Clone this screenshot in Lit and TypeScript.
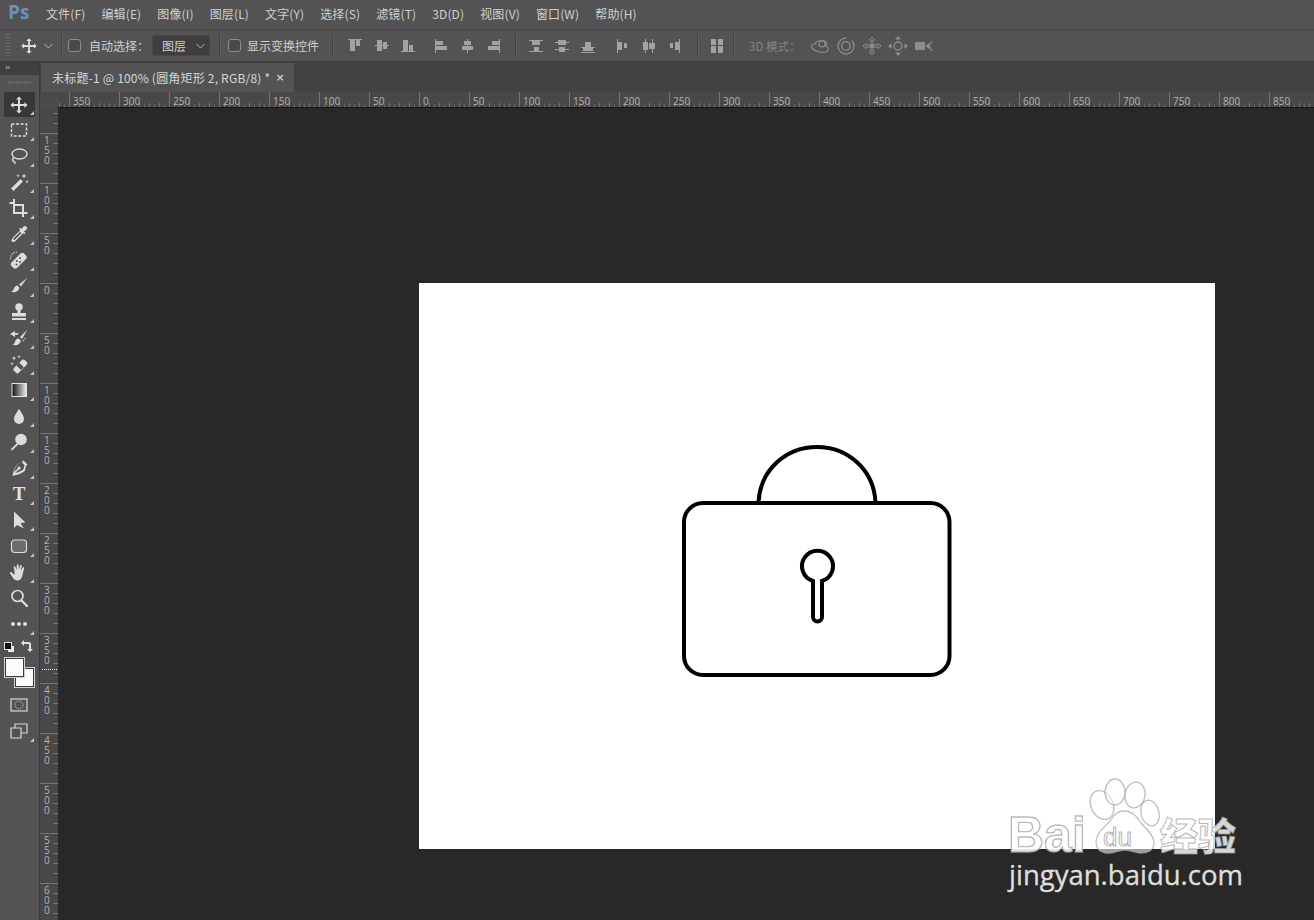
import { LitElement, html, css, svg } from "lit";
import { customElement } from "lit/decorators.js";

const MENUS = ["文件(F)", "编辑(E)", "图像(I)", "图层(L)", "文字(Y)", "选择(S)", "滤镜(T)", "3D(D)", "视图(V)", "窗口(W)", "帮助(H)"];

const moveIcon = svg`<path d="M10 1.5l3 3h-2v4.500h4.500v-2l3 3-3 3v-2H11v4.500h2l-3 3-3-3h2V11H4.500v2l-3-3 3-3v2H9V4.500H7z"/>`;

const TOOLS: { k: string; i: unknown; c?: boolean }[] = [
  { k: "move", i: moveIcon, c: true },
  { k: "marquee", i: svg`<rect x="2.500" y="4" width="15" height="12" fill="none" stroke="currentColor" stroke-width="1.400" stroke-dasharray="3 1.600"/>`, c: true },
  { k: "lasso", i: svg`<ellipse cx="10.500" cy="8" rx="7.500" ry="5" fill="none" stroke="currentColor" stroke-width="1.400"/><path d="M5 12c-2 1-2 3 0 3.500 1.500.5 1 2 .5 2.500" fill="none" stroke="currentColor" stroke-width="1.400"/>`, c: true },
  { k: "wand", i: svg`<path d="M2 16.500L11.500 7l2.500 2.500L4.500 19z"/><path d="M15 1.500l.7 1.800 1.800.7-1.800.7-.7 1.800-.7-1.800-1.800-.7 1.800-.7zM18 8l.5 1.200 1.200.5-1.200.5-.5 1.200-.5-1.200-1.200-.5 1.200-.5zM9 2l.5 1.200 1.200.5-1.200.5L9 5.400l-.5-1.200-1.200-.5 1.200-.5z"/>`, c: true },
  { k: "crop", i: svg`<path d="M5 1v3H1.500v2H5v10h9v3h2v-3h3.500v-2H16V6H7v2h7v6H7V1z" transform="translate(-1 0)"/>`, c: true },
  { k: "dropper", i: svg`<path d="M12 5.500l3 3-8 8c-1 1-2.500 1.500-3.500 1.500L2.500 17c0-1 .5-2.500 1.500-3.500zM11 8l-6 6c-.5.5-.8 1-.9 1.500l1 .5c.5-.1 1-.4 1.500-.9l6-6z" fill-rule="evenodd"/><path d="M11 3.500l1.500 1.500 2-2.500c1-1 2.500-.5 3 0s1 2 0 3l-2.500 2 1.500 1.500-1.200 1.200-5-5z"/>`, c: true },
  { k: "heal", i: svg`<path d="M2.500 12.500l9-9c1-1 2.500-1 3.500 0l2 2c1 1 1 2.500 0 3.500l-9 9c-1 1-2.500 1-3.500 0l-2-2c-1-1-1-2.500 0-3.500z"/><g fill="#535353"><circle cx="8" cy="11" r="1"/><circle cx="11" cy="8" r="1"/><circle cx="11" cy="12" r="1"/><circle cx="7.500" cy="14.500" r="1"/></g><path d="M1.500 9C1.500 5 4 2 8 2" fill="none" stroke="currentColor" stroke-width="1.200" stroke-dasharray="1.200 1.200"/>`, c: true },
  { k: "brush", i: svg`<path d="M18 2L10 8.500 12 10.500zM8.500 9.500c-2 0-3 1.500-3.500 3-.4 1.500-1.500 2.500-3 3 3 1.500 7 .5 8-2.500.4-1.200 0-2-.2-2z"/>`, c: true },
  { k: "stamp", i: svg`<circle cx="10" cy="5" r="3.700"/><path d="M8.500 8h3v3H17v3.500H3V11h5.500zM3 16h14v2H3z"/>`, c: true },
  { k: "history", i: svg`<path d="M18.500 1.500L11 9l2 2zM9.500 10.500c-2 0-3 1.500-3.500 3-.4 1.500-1 2.500-2.500 3 3 1.500 7 .5 8-2.500.4-1.200 0-2-.2-2z"/><path d="M1 6l5-3v2h4l-2 2H6v2z"/><path d="M14 13c1-1 2-2 2.500-3.500" fill="none" stroke="currentColor" stroke-width="1.200" stroke-dasharray="1.200 1.200"/>`, c: true },
  { k: "eraser", i: svg`<path d="M5 14l8-8c.8-.8 2-.8 2.800 0l2 2c.8.800.8 2 0 2.800l-8 8c-.8.8-2 .8-2.800 0l-2-2c-.8-.800-.8-2 0-2.800z"/><path d="M7.500 11.500l2.800-2.800 4.500 4.500-2.800 2.800z" fill="#535353"/><path d="M5 2l.6 1.600 1.600.6-1.600.6L5 6.400l-.6-1.600-1.600-.6 1.600-.6zM10 1l.5 1.200 1.200.5-1.200.5-.5 1.200-.5-1.200-1.200-.5 1.200-.5zM3 8l.5 1.200 1.200.5-1.200.5-.5 1.200-.5-1.200-1.200-.5 1.200-.5z"/>`, c: true },
  { k: "gradient", i: svg`<defs><linearGradient id="gr"><stop offset="0" stop-color="#111"/><stop offset="1" stop-color="#eee"/></linearGradient></defs><rect x="3" y="3.500" width="14.500" height="13" fill="url(#gr)" stroke="#e4e4e4" stroke-width="1"/>`, c: true },
  { k: "drop", i: svg`<path d="M10 2.500c1 3 5 6.500 5 10.500a5 5 0 0 1-10 0c0-4 4-7.500 5-10.500z"/>`, c: true },
  { k: "dodge", i: svg`<circle cx="12" cy="7.500" r="5.800"/><path d="M7.800 11.200l1.400 1.400-5.500 5.500c-.5.500-1 .5-1.400 0s-.4-.9 0-1.400z"/>`, c: true },
  { k: "pen", i: svg`<path d="M14 2l4.500 4.500-1.500 1.500-1 4.500c-2 2.500-7 4.500-12.500 5.500 1-5.500 3-10.500 5.500-12.500l4.500-1zM13 4.500l-3.500.8c-2 1.600-3.500 5.200-4.300 8.700l3.300-3.300a1.600 1.600 0 1 1 1 1L6.200 15c3.500-.8 7-2.300 8.500-4.300l.8-3.700z" fill-rule="evenodd"/>`, c: true },
  { k: "type", i: null, c: true },
  { k: "select", i: svg`<path d="M5 1.500l11.500 11-5 .5 3.500 5.500-7-3.500-3 3z"/>`, c: true },
  { k: "shape", i: svg`<rect x="2.500" y="4" width="15" height="12.500" rx="3" fill="#6c6c6c" stroke="currentColor" stroke-width="1.200"/>`, c: true },
  { k: "hand", i: svg`<path d="M5.500 9l-.8-3.500c-.3-1.200 1.300-1.600 1.700-.5L7.500 8 7.800 3.200c.1-1.300 1.800-1.300 1.900 0l.3 4.600 1-4.100c.3-1.200 1.900-.9 1.700.3l-.7 4.500 1.500-2.800c.6-1 2-.4 1.600.7L13.500 13c-.5 3-2 5.500-5 5.500-2.500 0-4-1.500-5-3.500L1 11.500c-.6-1 .7-2 1.500-1.200L5.500 13z"/>`, c: true },
  { k: "zoom", i: svg`<circle cx="8.500" cy="8" r="5.500" fill="none" stroke="currentColor" stroke-width="1.700"/><path d="M12.500 12.500L18 18" fill="none" stroke="currentColor" stroke-width="2.400" stroke-linecap="round"/>` },
  { k: "more", i: svg`<circle cx="4" cy="10" r="2"/><circle cx="10" cy="10" r="2"/><circle cx="16" cy="10" r="2"/>`, c: true },
];

const R = (x: number, y: number, w: number, h: number) => svg`<rect x=${x} y=${y} width=${w} height=${h}></rect>`;
const ALIGN: number[][][] = [
  [[1, 1, 14, 1], [3, 2, 5, 11], [9, 2, 4, 6]],
  [[1, 7, 14, 1], [3, 2, 5, 11], [9, 4, 4, 7]],
  [[1, 13, 14, 1], [3, 2, 5, 11], [9, 7, 4, 6]],
  [[1, 1, 1, 14], [2, 3, 7, 4], [2, 8, 11, 4]],
  [[7, 1, 1, 14], [4, 3, 7, 4], [2, 8, 11, 4]],
  [[13, 1, 1, 14], [6, 3, 7, 4], [2, 8, 11, 4]],
  [[1, 2, 14, 1], [4, 3, 8, 4], [1, 13, 14, 1], [6, 9, 5, 4]],
  [[1, 4, 14, 1], [4, 2, 8, 5], [1, 11, 14, 1], [5, 9, 6, 5]],
  [[5, 4, 6, 5], [1, 9, 14, 1], [3, 10, 10, 3], [1, 14, 14, 1]],
  [[3, 1, 1, 14], [4, 4, 4, 8], [10, 5, 3, 5]],
  [[4, 1, 1, 14], [2, 4, 5, 8], [11, 1, 1, 14], [8, 5, 6, 6]],
  [[12, 1, 1, 14], [8, 4, 4, 8], [3, 5, 3, 5]],
];

const MODE3D = [
  svg`<path d="M3 13c-3-2-1-5 2-5 1-3 5-4 8-3 3-1 5 3 3 5 3 1 3 5 0 6-3 1-10 0-13-3z" fill="none" stroke="currentColor" stroke-width="1.200"/><circle cx="12" cy="8" r="3" fill="none" stroke="currentColor" stroke-width="1.200"/>`,
  svg`<circle cx="10" cy="10" r="8" fill="none" stroke="currentColor" stroke-width="1.300" stroke-dasharray="38 6"/><circle cx="10" cy="10" r="4.300" fill="none" stroke="currentColor" stroke-width="1.300"/>`,
  svg`<path d="M10 1l2.500 3H11v5h5V7.500l3 2.500-3 2.500V11h-5v5h1.500L10 19l-2.500-3H9v-5H4v1.500L1 10l3-2.500V9h5V4H7.500z" fill="none" stroke="currentColor"/><circle cx="10" cy="10" r="2"/>`,
  svg`<path d="M10 0l3 3.500H7zM10 20l-3-3.500h6zM0 10l3.500-3v6zM20 10l-3.500 3V7z"/><circle cx="10" cy="10" r="4" fill="none" stroke="currentColor" stroke-width="1.300"/>`,
  svg`<rect x="1" y="6" width="10" height="8" rx="1"/><path d="M11.500 10l3.500-3v6z"/><path d="M18 5l-3 5 3 5" fill="none" stroke="currentColor" stroke-width="1.200"/>`,
];

const HT: number[] = [];
for (let i = -7; i <= 17; i++) HT.push(i * 50);
const VT: number[] = [];
for (let i = -3; i <= 12; i++) VT.push(i * 50);

@customElement("app-root")
export class AppRoot extends LitElement {
  static styles = css`
    :host { display: block; width: 1314px; height: 920px; font-family: "Noto Sans CJK SC", "Noto Sans", sans-serif; }
    .app { position: relative; width: 1314px; height: 920px; overflow: hidden; display: flex; flex-direction: column; background: #282828; color: #cfcfcf; }
    .menu { height: 29px; background: #535353; display: flex; align-items: center; flex: none; font-size: 12px; letter-spacing: .14px; }
    .logo { width: 46px; padding-left: 8px; box-sizing: border-box; font: bold 19px "Open Sans", sans-serif; letter-spacing: 0; color: #6893bf; margin-top: -5px; }
    .menu-items { display: flex; gap: 16px; margin-top: -2px; }
    .options { height: 33px; background: #535353; border-top: 1px solid #454545; border-bottom: 1px solid #3c3c3c; box-sizing: border-box; display: flex; align-items: center; flex: none; font-size: 12px; }
    .grip { width: 5px; height: 24px; margin-left: 5px; background: repeating-linear-gradient(#6a6a6a 0 1px, transparent 1px 3px); flex: none; }
    .opt-ic { width: 18px; height: 18px; display: block; flex: none; color: #dcdcdc; }
    .chev { width: 9px; height: 6px; flex: none; color: #b8b8b8; }
    .sep { width: 1px; height: 24px; background: #414141; box-shadow: 1px 0 #5f5f5f; flex: none; }
    .check { width: 11px; height: 11px; border: 1px solid #8d8d8d; border-radius: 3px; background: #4a4a4a; flex: none; }
    .select { width: 58px; height: 21px; background: #3e3e3e; border: 1px solid #484848; border-radius: 2px; box-sizing: border-box; display: flex; align-items: center; justify-content: space-between; padding: 0 4px 0 9px; flex: none; }
    .label { flex: none; white-space: nowrap; }
    .a-ic { width: 16px; height: 16px; fill: #a2a2a2; flex: none; display: block; }
    .d-ic { width: 20px; height: 20px; color: #8e8e8e; fill: #8e8e8e; flex: none; display: block; }
    .dim { color: #858585; font-size: 11.5px; flex: none; white-space: nowrap; }
    .body { flex: 1; display: flex; min-height: 0; }
    .tools { width: 40px; flex: none; background: #535353; border-right: 1px solid #3a3a3a; box-sizing: border-box; display: flex; flex-direction: column; }
    .t-head { height: 13px; background: #3f3f3f; font: 8px/12px "DejaVu Sans", sans-serif; color: #bdbdbd; padding-left: 5px; letter-spacing: -1px; }
    .t-grip { height: 3px; margin: 6px 8px 8px; background: repeating-linear-gradient(90deg, #6b6b6b 0 1px, transparent 1px 2px); }
    .tool { position: relative; width: 31px; height: 26px; margin-left: 4px; padding-right: 1px; flex: none; display: flex; align-items: center; justify-content: center; color: #dcdcdc; fill: #dcdcdc; border-radius: 2px; box-sizing: border-box; }
    .tool.on { background: #383838; height: 25px; }
    .tool svg { width: 20px; height: 20px; display: block; }
    .tool.c::after { content: ""; position: absolute; right: 1px; bottom: 2px; border: 2px solid transparent; border-right-color: #c4c4c4; border-bottom-color: #c4c4c4; }
    .t-letter { font: bold 19px/20px "Liberation Serif", serif; color: #e2e2e2; }
    .colors { position: relative; height: 52px; margin-top: 3px; flex: none; }
    .swap { position: absolute; left: 21px; top: 0; width: 12px; height: 12px; color: #e0e0e0; }
    .mini-fg { position: absolute; left: 4px; top: 2px; width: 6px; height: 6px; background: #111; border: 1px solid #ddd; z-index: 1; }
    .mini-bg { position: absolute; left: 8px; top: 6px; width: 6px; height: 6px; background: #e8e8e8; }
    .fg, .bg { position: absolute; width: 17px; height: 17px; background: #fbfbfb; border: 1px solid #3a3a3a; box-shadow: 0 0 0 1px #cfcfcf; }
    .fg { left: 5px; top: 18px; z-index: 1; }
    .bg { left: 15px; top: 28px; }
    .mode { width: 31px; height: 26px; margin-left: 4px; padding-right: 1px; box-sizing: border-box; flex: none; display: flex; align-items: center; justify-content: center; position: relative; color: #d8d8d8; }
    .mode svg { width: 20px; height: 20px; display: block; }
    .mode.c::after { content: ""; position: absolute; right: 1px; bottom: 2px; border: 2px solid transparent; border-right-color: #c4c4c4; border-bottom-color: #c4c4c4; }
    .right { flex: 1; min-width: 0; display: flex; flex-direction: column; }
    .tabs { height: 30px; flex: none; background: #424242; display: flex; align-items: flex-end; padding-left: 1px; }
    .tab { width: 253px; height: 29px; background: #535353; display: flex; align-items: center; padding: 0 10px 0 11px; box-sizing: border-box; justify-content: space-between; font-size: 12px; letter-spacing: .2px; color: #d6d6d6; }
    .x { font: bold 11px "DejaVu Sans", sans-serif; color: #c8c8c8; margin-right: -1px; }
    .hr { height: 16px; flex: none; background: #484848; display: block; width: 1274px; }
    .row { flex: 1; min-height: 0; display: flex; }
    .vr { width: 18px; flex: none; background: #484848; display: block; height: 812px; }
    .canvas { flex: 1; min-width: 0; background: #282828; padding: 175px 0 0 361px; box-sizing: border-box; overflow: hidden; }
    .page { width: 796px; height: 566px; background: #fff; display: block; }
    .wm { position: absolute; left: 1000px; top: 770px; width: 260px; height: 130px; pointer-events: none; }
    .rt { font: 10px "Open Sans", sans-serif; fill: #b4b4b4; }
    .tm { stroke: #747474; stroke-width: 1; }
    .wm-big { font: 700 50px "Liberation Sans", sans-serif; fill: rgba(255,255,255,.88); stroke: rgba(170,170,170,.8); stroke-width: 1.4px; }
    .wm-du { font: 400 26px "Liberation Sans", sans-serif; fill: rgba(255,255,255,.8); stroke: rgba(170,170,170,.85); stroke-width: 1.1px; }
    .wm-cn { font: 900 38px "Noto Sans CJK SC", sans-serif; fill: rgba(255,255,255,.82); stroke: rgba(150,150,150,.7); stroke-width: 1px; }
    .wm-url { font: 400 27.5px "Open Sans", sans-serif; fill: #dedede; stroke: #dedede; stroke-width: .35px; }
  `;

  private aIcon(r: number[][]) {
    return html`<svg class="a-ic" viewBox="0 0 16 16">${r.map((a) => R(a[0], a[1], a[2], a[3]))}</svg>`;
  }

  private spacer(w: number) {
    return html`<span style="width:${w}px;flex:none"></span>`;
  }

  private optionsBar() {
    const chev = html`<svg class="chev" viewBox="0 0 9 6"><path d="M.5 1l4 4 4-4" fill="none" stroke="currentColor"></path></svg>`;
    const xs = [346, 373, 399, 433, 459, 485, 527, 553, 579, 613, 640, 666];
    let cur = 332;
    const align = ALIGN.map((a, i) => {
      const parts: unknown[] = [];
      if (i === 6) {
        parts.push(this.spacer(514 - cur), html`<span class="sep"></span>`);
        cur = 515;
      }
      parts.push(this.spacer(xs[i] - cur), this.aIcon(a));
      cur = xs[i] + 16;
      return parts;
    });
    return html`<div class="options">
      <span class="grip"></span>
      ${this.spacer(10)}
      <svg class="opt-ic" viewBox="0 0 20 20" fill="currentColor">${moveIcon}</svg>
      ${this.spacer(6)}${chev}
      ${this.spacer(8)}<span class="sep"></span>
      ${this.spacer(6)}<span class="check"></span>
      ${this.spacer(8)}<span class="label">自动选择：</span>
      ${this.spacer(3)}<span class="select"><span>图层</span>${chev}</span>
      ${this.spacer(9)}<span class="sep"></span>
      ${this.spacer(8)}<span class="check"></span>
      ${this.spacer(6)}<span class="label">显示变换控件</span>
      ${this.spacer(13)}<span class="sep"></span>
      ${align}
      ${this.spacer(696 - cur)}<span class="sep"></span>
      ${this.spacer(11)}
      <svg class="a-ic" viewBox="0 0 16 16"><rect x="2" y="1" width="5" height="6"></rect><rect x="9" y="1" width="5" height="6"></rect><rect x="2" y="8" width="5" height="7"></rect><rect x="9" y="8" width="5" height="7"></rect></svg>
      ${this.spacer(8)}<span class="sep"></span>
      ${this.spacer(15)}<span class="dim">3D 模式：</span>
      ${this.spacer(10)}
      ${MODE3D.map((m, i) => html`${i ? this.spacer(6) : ""}<svg class="d-ic" viewBox="0 0 20 20">${m}</svg>`)}
    </div>`;
  }

  private hRuler() {
    const origin = 419 - 40;
    const minors: number[] = [];
    for (let p = -380; p < 900; p += 5) minors.push(p);
    return html`<svg class="hr" viewBox="0 0 1274 16">
      ${minors.map((p) => svg`<line class="tm" x1=${origin + p + 0.5} x2=${origin + p + 0.5} y1=${p % 50 === 0 ? 0 : p % 10 === 0 ? 11 : 13} y2="16"></line>`)}
      ${HT.map((v) => svg`<text class="rt" x=${origin + v + 4} y="13">${Math.abs(v)}</text>`)}
      <rect x="0" y="0" width="18" height="16" fill="#4a4a4a"></rect>
      <line x1="18" x2="1274" y1="15.5" y2="15.5" stroke="#161616"></line>
    </svg>`;
  }

  private vRuler() {
    const origin = 283 - 108;
    const minors: number[] = [];
    for (let p = -170; p < 700; p += 10) minors.push(p);
    return html`<svg class="vr" viewBox="0 0 18 812">
      ${minors.map((p) => svg`<line class="tm" y1=${origin + p + 0.5} y2=${origin + p + 0.5} x1=${p % 50 === 0 ? 0 : 13} x2="18"></line>`)}
      ${VT.map((v) => svg`<text class="rt" y=${origin + v + 11}>${String(Math.abs(v)).split("").map((d, i) => svg`<tspan x="4" dy=${i ? 10 : 0}>${d}</tspan>`)}</text>`)}
      <line x1="2" x2="18" y1="561.5" y2="561.5" stroke="#f0f0f0" stroke-dasharray="1 1"></line>
    </svg>`;
  }

  render() {
    return html`<div class="app">
      <div class="menu">
        <div class="logo">Ps</div>
        <div class="menu-items">${MENUS.map((m) => html`<span>${m}</span>`)}</div>
      </div>
      ${this.optionsBar()}
      <div class="body">
        <div class="tools">
          <div class="t-head">››</div>
          <div class="t-grip"></div>
          ${TOOLS.map((t, i) => html`<div class="tool ${i === 0 ? "on" : ""} ${t.c ? "c" : ""}">
            ${t.k === "type" ? html`<span class="t-letter">T</span>` : html`<svg viewBox="0 0 20 20">${t.i}</svg>`}
          </div>`)}
          <div class="colors">
            <span class="mini-fg"></span><span class="mini-bg"></span>
            <svg class="swap" viewBox="0 0 12 12"><path d="M0 3l3-3v2h5a2 2 0 0 1 2 2v5h2l-3 3-3-3h2V4H3v2z" fill="currentColor"></path></svg>
            <span class="fg"></span><span class="bg"></span>
          </div>
          <div class="mode"><svg viewBox="0 0 20 20"><rect x="2" y="4" width="16" height="12" fill="none" stroke="currentColor" stroke-width="1.2"></rect><circle cx="10" cy="10" r="4" fill="none" stroke="currentColor" stroke-dasharray="1 1"></circle></svg></div>
          <div class="mode c"><svg viewBox="0 0 20 20"><path d="M6 7V3h12v9h-6M2 7h10v10H2z" fill="none" stroke="currentColor" stroke-width="1.2"></path></svg></div>
        </div>
        <div class="right">
          <div class="tabs"><div class="tab"><span>未标题-1 @ 100% (圆角矩形 2, RGB/8) *</span><span class="x">×</span></div></div>
          ${this.hRuler()}
          <div class="row">
            ${this.vRuler()}
            <div class="canvas">
              <svg class="page" viewBox="419 283 796 566" fill="none" stroke="#000" stroke-width="4">
                <path d="M758.5 502.5C760 470 786 447 817 447s57 23 58.5 55.5"></path>
                <rect x="684" y="503" width="265.5" height="172" rx="19"></rect>
                <path d="M813 581V617a4.500 4.500 0 0 0 9 0V581A15.500 15.500 0 1 0 813 581Z"></path>
              </svg>
            </div>
          </div>
        </div>
      </div>
      <svg class="wm" viewBox="1000 770 260 130">
        <g fill="rgba(255,255,255,.55)" stroke="rgba(170,170,170,.75)" stroke-width="1.3">
          <ellipse cx="1102" cy="805" rx="11" ry="15" transform="rotate(-25 1102 805)"></ellipse>
          <ellipse cx="1115" cy="792" rx="10" ry="13"></ellipse>
          <ellipse cx="1135" cy="795" rx="10" ry="13" transform="rotate(10 1135 795)"></ellipse>
          <ellipse cx="1150" cy="813" rx="9" ry="13" transform="rotate(-15 1150 813)"></ellipse>
          <path d="M1124 811c9 0 13 6 17 12 4 5 13 11 13 20 0 7-6 10-13 10-6 0-9-3-16-3s-12 4-19 3c-6-1-10-5-10-11 0-9 8-14 13-20 5-6 7-11 15-11z"></path>
        </g>
        <text class="wm-big" x="1008" y="852">Bai</text>
        <text class="wm-du" x="1103" y="846">du</text>
        <text class="wm-cn" x="1160" y="850">经验</text>
        <text class="wm-url" x="1009" y="885">jingyan.baidu.com</text>
      </svg>
    </div>`;
  }
}
